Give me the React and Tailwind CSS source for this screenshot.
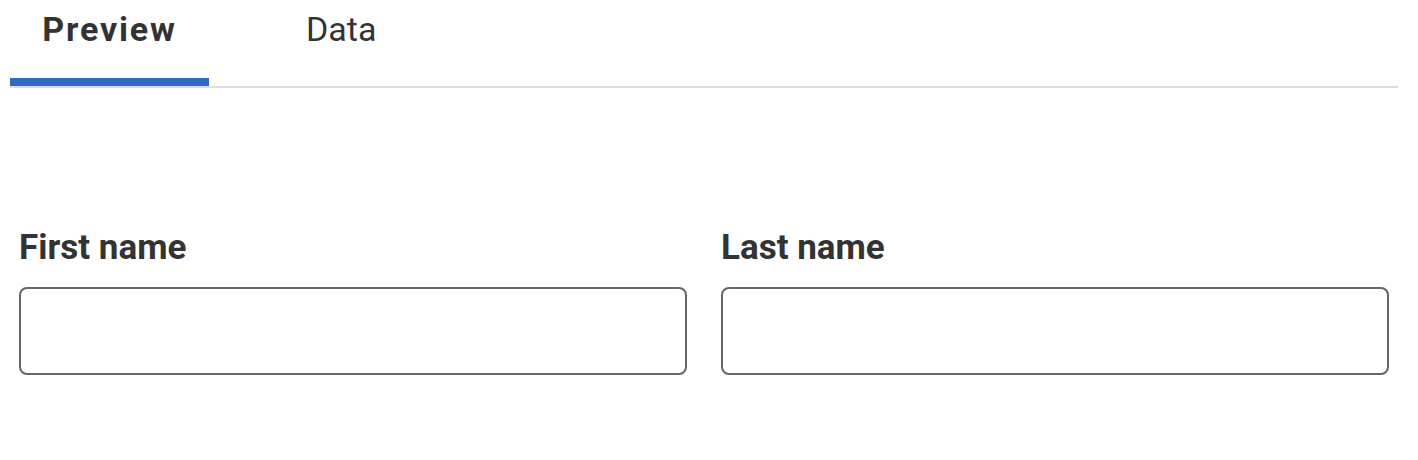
import { useState } from 'react'

export default function App() {
  const [tab, setTab] = useState('preview')

  return (
    <div className="min-h-[460px] bg-white px-[10px] font-['Roboto',sans-serif] text-[#333]">
      {/* Tabs */}
      <div className="flex w-[1388px] border-b-2 border-[#ddd]">
        <button
          onClick={() => setTab('preview')}
          className={`w-[199px] pt-[9px] pb-[29px] text-[34px] leading-[40px] border-b-8 ${
            tab === 'preview' ? 'border-[#2d6cc1] font-bold tracking-[1.8px]' : 'border-transparent font-normal'
          }`}
        >
          Preview
        </button>
        <button
          onClick={() => setTab('data')}
          className={`ml-[64px] px-[33px] pt-[9px] pb-[29px] text-[34px] leading-[40px] border-b-8 ${
            tab === 'data' ? 'border-[#2d6cc1] font-bold' : 'border-transparent font-normal'
          }`}
        >
          Data
        </button>
      </div>

      {/* Form */}
      <div className="mt-[140px] ml-[9px] grid w-[1370px] grid-cols-2 gap-x-[34px]">
        <div>
          <label className="block text-[35px] leading-[40px] font-bold">First name</label>
          <input
            type="text"
            className="mt-[19px] block h-[88px] w-full rounded-[8px] border-2 border-[#666] px-4 text-[30px] outline-none"
          />
        </div>
        <div>
          <label className="block text-[35px] leading-[40px] font-bold">Last name</label>
          <input
            type="text"
            className="mt-[19px] block h-[88px] w-full rounded-[8px] border-2 border-[#666] px-4 text-[30px] outline-none"
          />
        </div>
      </div>
    </div>
  )
}
